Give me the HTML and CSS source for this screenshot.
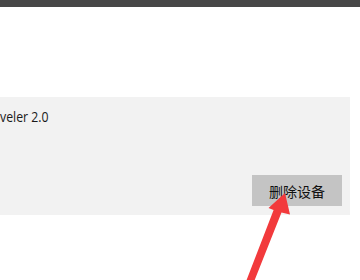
FILE: index.html
```html
<!DOCTYPE html>
<html>
<head>
<meta charset="utf-8">
<link rel="stylesheet" href="styles.css">
</head>
<body>
<div class="topbar"></div>
<div class="panel">
  <div class="name">veler 2.0</div>
  <div class="actions"><button class="remove">删除设备</button></div>
</div>
<svg class="arrow" width="360" height="280" viewBox="0 0 360 280">
  <polygon points="285,193 290,214.5 281.5,212.6 253.3,283.5 246.2,281 273.6,210 268.5,208" fill="#f23a3c"/>
</svg>
</body>
</html>
```
FILE: styles.css
```css
html, body {
  margin: 0;
  padding: 0;
  background: #ffffff;
  width: 360px;
  height: 280px;
  overflow: hidden;
  font-family: "Open Sans", "Noto Sans", "Noto Sans CJK SC", sans-serif;
}
.topbar {
  height: 7px;
  background: #474747;
}
.panel {
  margin-top: 90px;
  width: 350px;
  height: 118px;
  background: #f2f2f2;
  box-sizing: border-box;
  padding: 9px 8px 9px 0;
  display: flex;
  flex-direction: column;
  justify-content: space-between;
}
.name {
  font-size: 15px;
  line-height: 20px;
  color: #1a1a1a;
  transform: scaleX(0.82);
  transform-origin: left center;
}
.actions {
  display: flex;
  justify-content: flex-end;
}
.remove {
  width: 90px;
  height: 31px;
  border: none;
  background: #c4c4c4;
  color: #111;
  font-family: "Noto Sans CJK SC", sans-serif;
  font-size: 14px;
  padding: 0;
}
.arrow {
  position: absolute;
  left: 0;
  top: 0;
}
```
